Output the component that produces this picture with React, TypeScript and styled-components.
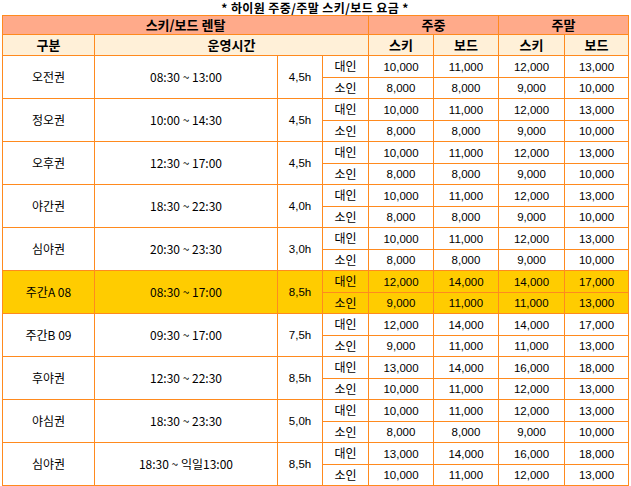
import React from "react";
import styled, { createGlobalStyle } from "styled-components";

const GlobalStyle = createGlobalStyle`
  html, body { margin: 0; padding: 0; background: #ffffff; }
  body { font-family: "Liberation Sans", "Noto Sans CJK KR", sans-serif; color: #000; }
`;

const Page = styled.div`
  width: 631px;
  padding: 0 0 0 2px;
  box-sizing: border-box;
`;

const Title = styled.div`
  width: 626px;
  height: 15px;
  padding-top: 1px;
  box-sizing: border-box;
  line-height: 14px;
  text-align: center;
  font-size: 12px;
  font-weight: bold;
  font-family: "Noto Sans CJK KR", sans-serif;
  letter-spacing: 0.4px;
`;

const Table = styled.table`
  width: 626px;
  border-collapse: collapse;
  table-layout: fixed;
  font-size: 12px;
`;

const Row = styled.tr<{ $h: number }>`
  height: ${(p) => p.$h}px;
`;

const Cell = styled.td<{ $bg?: string }>`
  border: 1px solid #ff8a1e;
  padding: 0;
  text-align: center;
  vertical-align: middle;
  line-height: 14px;
  background: ${(p) => p.$bg || "#ffffff"};
  white-space: nowrap;
`;

const Head1 = styled.th`
  border: 1px solid #ff8a1e;
  padding: 0;
  background: #ffaa8a;
  font-size: 13px;
  font-weight: bold;
  font-family: "Noto Sans CJK KR", sans-serif;
  line-height: 14px;
`;

const Head2 = styled.th`
  border: 1px solid #ff8a1e;
  padding: 0;
  background: #fff0d8;
  font-size: 13px;
  font-weight: bold;
  font-family: "Noto Sans CJK KR", sans-serif;
  line-height: 14px;
`;

const Kor = styled.span`
  font-family: "Noto Sans CJK KR", sans-serif;
  font-size: 12px;
`;

const Num = styled.span`
  font-family: "Liberation Sans", "Noto Sans CJK KR", sans-serif;
  font-size: 11.5px;
`;

type Group = {
  name: string;
  time: string;
  hours: string;
  adult: string[];
  child: string[];
  hi?: boolean;
};

const groups: Group[] = [
  { name: "오전권", time: "08:30 ~ 13:00", hours: "4,5h", adult: ["10,000", "11,000", "12,000", "13,000"], child: ["8,000", "8,000", "9,000", "10,000"] },
  { name: "정오권", time: "10:00 ~ 14:30", hours: "4,5h", adult: ["10,000", "11,000", "12,000", "13,000"], child: ["8,000", "8,000", "9,000", "10,000"] },
  { name: "오후권", time: "12:30 ~ 17:00", hours: "4,5h", adult: ["10,000", "11,000", "12,000", "13,000"], child: ["8,000", "8,000", "9,000", "10,000"] },
  { name: "야간권", time: "18:30 ~ 22:30", hours: "4,0h", adult: ["10,000", "11,000", "12,000", "13,000"], child: ["8,000", "8,000", "9,000", "10,000"] },
  { name: "심야권", time: "20:30 ~ 23:30", hours: "3,0h", adult: ["10,000", "11,000", "12,000", "13,000"], child: ["8,000", "8,000", "9,000", "10,000"] },
  { name: "주간A 08", time: "08:30 ~ 17:00", hours: "8,5h", adult: ["12,000", "14,000", "14,000", "17,000"], child: ["9,000", "11,000", "11,000", "13,000"], hi: true },
  { name: "주간B 09", time: "09:30 ~ 17:00", hours: "7,5h", adult: ["12,000", "14,000", "14,000", "17,000"], child: ["9,000", "11,000", "11,000", "13,000"] },
  { name: "후야권", time: "12:30 ~ 22:30", hours: "8,5h", adult: ["13,000", "14,000", "16,000", "18,000"], child: ["10,000", "11,000", "12,000", "13,000"] },
  { name: "야심권", time: "18:30 ~ 23:30", hours: "5,0h", adult: ["10,000", "11,000", "12,000", "13,000"], child: ["8,000", "8,000", "9,000", "10,000"] },
  { name: "심야권", time: "18:30 ~ 익일13:00", hours: "8,5h", adult: ["13,000", "14,000", "16,000", "18,000"], child: ["10,000", "11,000", "12,000", "13,000"] },
];

const widths = [92, 183, 45, 46, 65, 65, 66, 64];

export default function App() {
  return (
    <Page>
      <GlobalStyle />
      <Title>* 하이원 주중/주말 스키/보드 요금 *</Title>
      <Table>
        <colgroup>
          {widths.map((w, i) => (
            <col key={i} style={{ width: w }} />
          ))}
        </colgroup>
        <thead>
          <Row $h={19}>
            <Head1 colSpan={4}>스키/보드 렌탈</Head1>
            <Head1 colSpan={2}>주중</Head1>
            <Head1 colSpan={2}>주말</Head1>
          </Row>
          <Row $h={21}>
            <Head2>구분</Head2>
            <Head2 colSpan={3}>운영시간</Head2>
            <Head2>스키</Head2>
            <Head2>보드</Head2>
            <Head2>스키</Head2>
            <Head2>보드</Head2>
          </Row>
        </thead>
        <tbody>
          {groups.map((g, gi) => {
            const bg = g.hi ? "#ffcc00" : undefined;
            return (
              <React.Fragment key={gi}>
                <Row $h={22}>
                  <Cell rowSpan={2} $bg={bg}>
                    <Kor>{g.name}</Kor>
                  </Cell>
                  <Cell rowSpan={2} $bg={bg}>
                    <Kor>{g.time}</Kor>
                  </Cell>
                  <Cell rowSpan={2} $bg={bg}>
                    <Num>{g.hours}</Num>
                  </Cell>
                  <Cell $bg={bg}>
                    <Kor>대인</Kor>
                  </Cell>
                  {g.adult.map((v, i) => (
                    <Cell key={i} $bg={bg}>
                      <Num>{v}</Num>
                    </Cell>
                  ))}
                </Row>
                <Row $h={21}>
                  <Cell $bg={bg}>
                    <Kor>소인</Kor>
                  </Cell>
                  {g.child.map((v, i) => (
                    <Cell key={i} $bg={bg}>
                      <Num>{v}</Num>
                    </Cell>
                  ))}
                </Row>
              </React.Fragment>
            );
          })}
        </tbody>
      </Table>
    </Page>
  );
}
